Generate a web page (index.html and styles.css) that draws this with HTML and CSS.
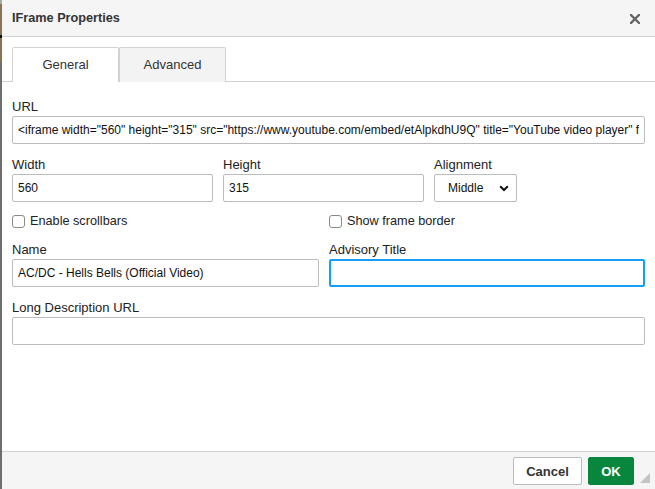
FILE: index.html
```html
<!DOCTYPE html>
<html>
<head>
<meta charset="utf-8">
<link rel="stylesheet" href="styles.css">
</head>
<body>
<div class="edge"></div>
<div class="dialog">
  <div class="header">
    <div class="title">IFrame Properties</div>
    <span class="close"><svg width="10" height="10" viewBox="0 0 10 10"><path d="M1 1L9 9M9 1L1 9" stroke="#666" stroke-width="2.4" stroke-linecap="square"/></svg></span>
  </div>
  <div class="tabs">
    <div class="tab active">General</div>
    <div class="tab">Advanced</div>
  </div>
  <div class="content">
    <div class="field">
      <label class="lbl">URL</label>
      <input class="inp" type="text" value="&lt;iframe width=&quot;560&quot; height=&quot;315&quot; src=&quot;https://www.youtube.com/embed/etAlpkdhU9Q&quot; title=&quot;YouTube video player&quot; frameborder=&quot;0&quot;">
    </div>
    <div class="row3">
      <div class="field">
        <label class="lbl">Width</label>
        <input class="inp" type="text" value="560">
      </div>
      <div class="field">
        <label class="lbl">Height</label>
        <input class="inp" type="text" value="315">
      </div>
      <div class="field">
        <label class="lbl">Alignment</label>
        <div class="select"><span>Middle</span><svg width="10" height="7" viewBox="0 0 10 7"><path d="M1.2 1.2L5 5L8.8 1.2" fill="none" stroke="#111" stroke-width="2"/></svg></div>
      </div>
    </div>
    <div class="grid2 checks">
      <label class="chk"><span class="box"></span>Enable scrollbars</label>
      <label class="chk"><span class="box"></span>Show frame border</label>
    </div>
    <div class="grid2 namerow">
      <div class="field">
        <label class="lbl">Name</label>
        <input class="inp" type="text" value="AC/DC - Hells Bells (Official Video)">
      </div>
      <div class="field">
        <label class="lbl">Advisory Title</label>
        <div class="inp focus"></div>
      </div>
    </div>
    <div class="field longdesc">
      <label class="lbl">Long Description URL</label>
      <input class="inp" type="text" value="">
    </div>
  </div>
  <div class="footer">
    <button class="btn cancel">Cancel</button>
    <button class="btn ok">OK</button>
    <span class="grip"></span>
  </div>
</div>
</body>
</html>
```
FILE: styles.css
```css
* { box-sizing: border-box; }
html, body { margin: 0; padding: 0; }
body {
  width: 655px;
  height: 489px;
  display: flex;
  overflow: hidden;
  font-family: "Liberation Sans", Arial, sans-serif;
  font-size: 13px;
  color: #333;
  background: #fff;
}
.edge {
  width: 2px;
  flex: none;
  background: linear-gradient(to bottom, #a8a8a8 0 4px, #8a7352 4px 35px, #111 35px 38px, #8a7352 38px 62px, #6e6e6e 62px);
}
.dialog {
  flex: 1;
  display: flex;
  flex-direction: column;
  position: relative;
  background: #fff;
}
.header {
  height: 37px;
  flex: none;
  background: #f5f5f5;
  border-bottom: 1px solid #d1d1d1;
  display: flex;
  align-items: center;
  justify-content: space-between;
  padding: 0 15px 0 10px;
}
.title {
  font-weight: bold;
  color: #333;
  font-size: 12.7px;
}
.close { display: flex; margin-top: 1px; }
.tabs {
  flex: none;
  display: flex;
  padding: 10px 0 0 10px;
  border-bottom: 1px solid #d1d1d1;
  height: 45px;
}
.tab {
  width: 107px;
  height: 35px;
  border: 1px solid #d1d1d1;
  border-bottom: none;
  background: #f3f3f3;
  color: #333;
  display: flex;
  align-items: center;
  justify-content: center;
  padding-bottom: 1px;
  border-radius: 2px 2px 0 0;
}
.tab.active { background: #fff; }
.tab + .tab { border-left: none; }
.tab.active + .tab { border-left: 1px solid #d1d1d1; }
.content {
  flex: 1;
  padding: 17px 10px 0 10px;
}
.field { display: flex; flex-direction: column; }
.lbl {
  line-height: 16px;
  margin-bottom: 1px;
  color: #222;
}
.inp {
  height: 28px;
  border: 1px solid #bcbcbc;
  border-radius: 2px;
  padding: 0 5px;
  font-family: "Liberation Sans", Arial, sans-serif;
  font-size: 12px;
  color: #111;
  background: #fff;
  outline: none;
  width: 100%;
  margin: 0;
}
.inp.focus { border: 2px solid #139ff7; }
.row3 {
  display: grid;
  grid-template-columns: 201px 201px 83px;
  column-gap: 10px;
  margin-top: 13px;
}
.select {
  height: 28px;
  border: 1px solid #bcbcbc;
  border-radius: 2px;
  display: flex;
  align-items: center;
  justify-content: space-between;
  padding: 0 7px 0 13px;
  color: #111;
  font-size: 12px;
  background: #fff;
}
.select svg { margin-top: 1px; }
.grid2 {
  display: grid;
  grid-template-columns: 307px 1fr;
  column-gap: 10px;
}
.checks { margin-top: 11px; height: 16px; }
.chk {
  display: flex;
  align-items: center;
  line-height: 16px;
  color: #222;
  font-size: 12.7px;
}
.box {
  width: 13px;
  height: 13px;
  border: 1px solid #8a8a8a;
  border-radius: 3px;
  background: #fff;
  margin-right: 5px;
  flex: none;
}
.namerow { margin-top: 13px; }
.longdesc { margin-top: 13px; }
.footer {
  flex: none;
  height: 38px;
  background: #f5f5f5;
  border-top: 1px solid #d1d1d1;
  display: flex;
  align-items: center;
  justify-content: flex-end;
  padding: 0 21px 0 0;
  gap: 6px;
  position: relative;
}
.btn {
  height: 28px;
  border-radius: 2px;
  font-family: "Liberation Sans", Arial, sans-serif;
  font-size: 13px;
  font-weight: bold;
  padding: 0;
  margin-top: 1px;
}
.cancel {
  width: 69px;
  background: #fff;
  border: 1px solid #bcbcbc;
  color: #333;
}
.ok {
  width: 46px;
  background: #09863e;
  border: 1px solid #09863e;
  color: #fff;
}
.grip {
  position: absolute;
  right: 5px;
  bottom: 6px;
  width: 0;
  height: 0;
  border-left: 10px solid transparent;
  border-bottom: 10px solid #c4c4c4;
}
```
